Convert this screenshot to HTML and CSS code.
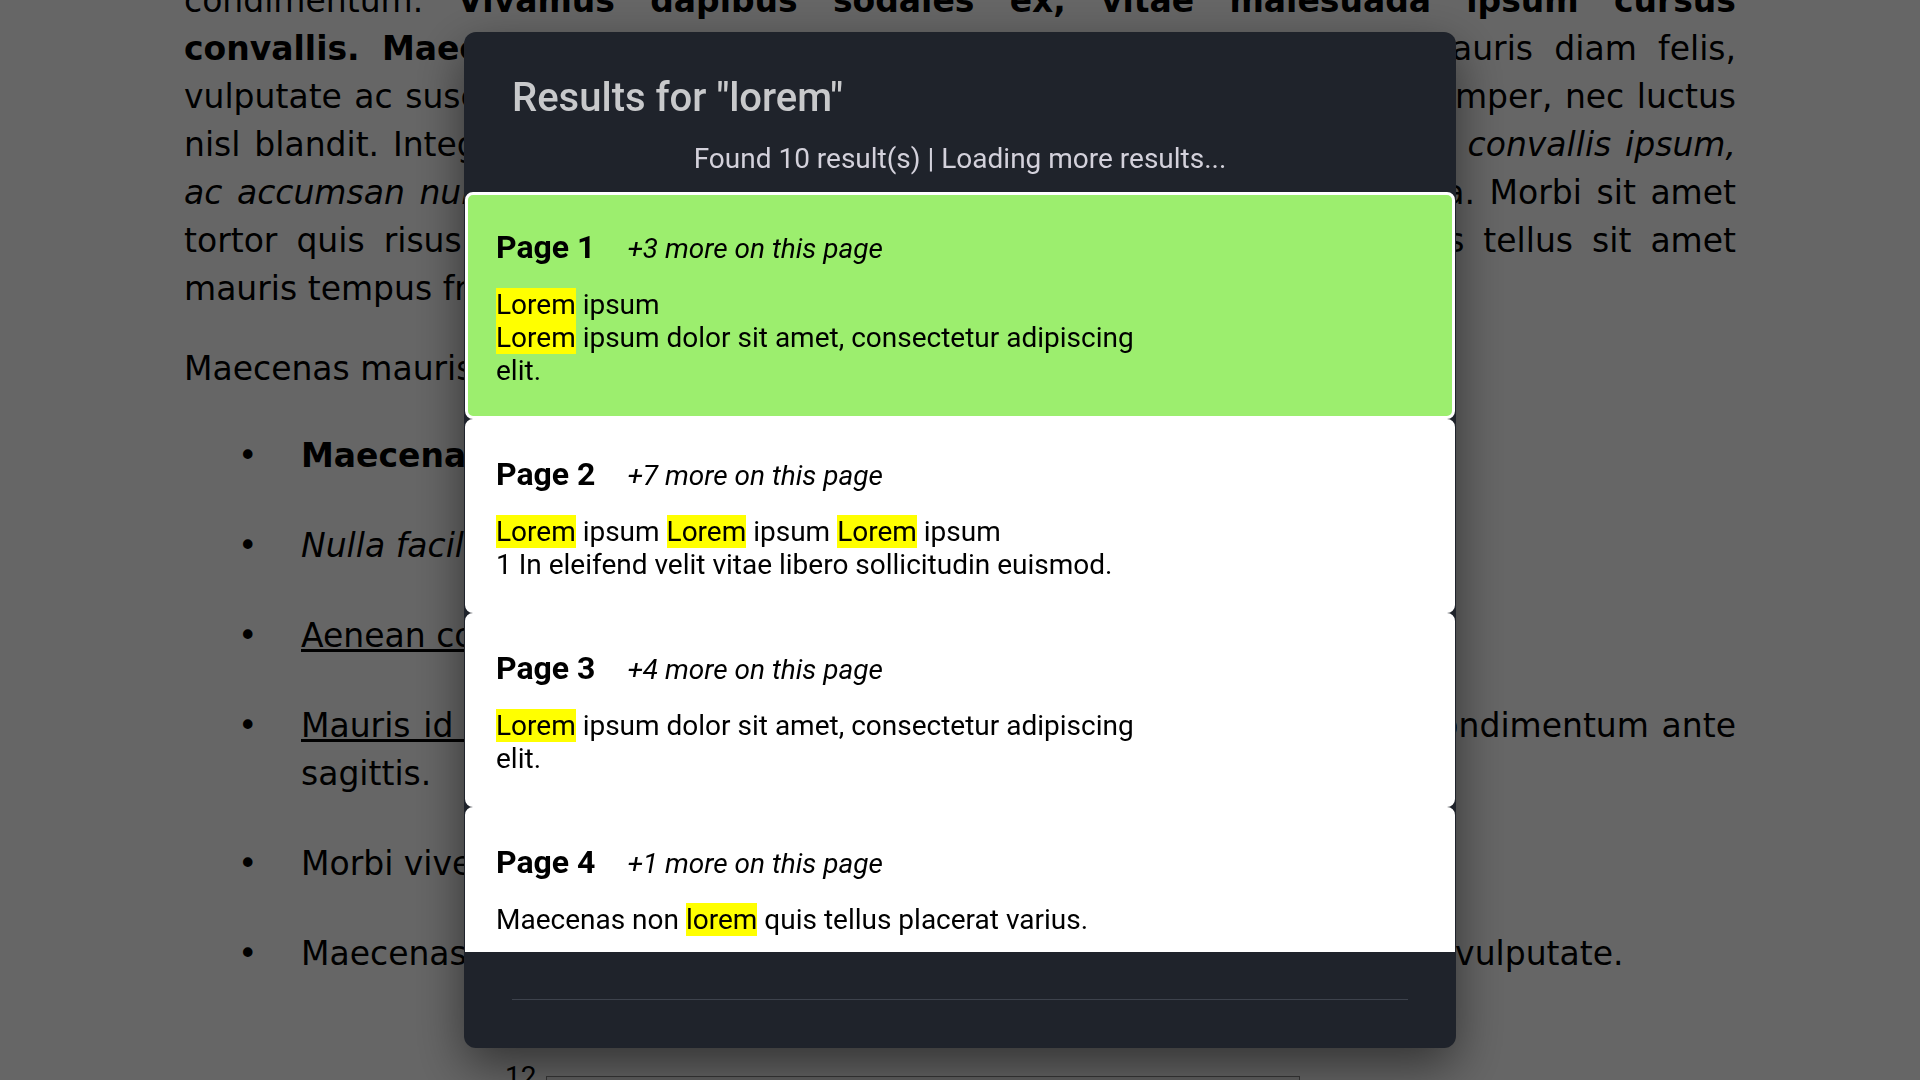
FILE: index.html
```html
<!DOCTYPE html>
<html lang="en">
<head>
<meta charset="utf-8">
<title>Search results</title>
<link rel="stylesheet" href="styles.css">
</head>
<body>
<main class="doc">
  <p class="justified">
    <span class="ln">condimentum. <b>Vivamus dapibus sodales ex, vitae malesuada ipsum cursus</b></span>
    <span class="ln"><b>convallis. Maecenas odio.</b> Sed faucibus varius turpis, non tempor mauris diam felis,</span>
    <span class="ln">vulputate ac suscipit erat pellentesque quam. Etiam lacinia nisl in ipsum semper, nec luctus</span>
    <span class="ln">nisl blandit. Integer posuere tellus sed quis neque pretium finibus, et vitae <i>convallis ipsum,</i></span>
    <span class="ln"><i>ac accumsan nulla</i> porta. Donec ultricies quam et sed dolor porta pharetra. Morbi sit amet</span>
    <span class="ln">tortor quis risus malesuada rhoncus. Curabitur purus lectus odio eu quis tellus sit amet</span>
    <span class="ln last">mauris tempus fringilla.</span>
  </p>
  <p class="second">Maecenas mauris elit, dignissim ac purus quis, tincidunt.</p>
  <ul class="items">
    <li><span class="txt"><b>Maecenas ultricies nunc eu lacus.</b></span></li>
    <li><span class="txt"><i>Nulla facilisi. Vivamus ut lorem.</i></span></li>
    <li><span class="txt"><a href="#">Aenean commodo ligula eget dolor.</a></span></li>
    <li><span class="txt justified"><span class="ln"><a href="#">Mauris id lorem</a> eget massa faucibus ultrices vel vitae augue, sed condimentum ante</span><span class="ln last">sagittis.</span></span></li>
    <li><span class="txt">Morbi viverra lacus vitae turpis.</span></li>
    <li><span class="txt">Maecenas pharetra lacus ut enim ultricies, et porttitor metus sodales vulputate.</span></li>
  </ul>
  <div class="meter-row">
    <span class="meter-label">12</span>
    <span class="meter-box"></span>
  </div>
</main>

<div class="overlay">
  <section class="modal" role="dialog" aria-labelledby="search-title">
    <header class="modal-head">
      <h2 id="search-title" class="modal-title">Results for "lorem"</h2>
      <p class="modal-status">Found 10 result(s) | Loading more results...</p>
    </header>
    <div class="results">
      <article class="result active">
        <h3 class="result-head">Page 1<em class="result-more">+3 more on this page</em></h3>
        <div class="snippet"><mark>Lorem</mark> ipsum</div>
        <div class="snippet"><mark>Lorem</mark> ipsum dolor sit amet, consectetur adipiscing elit.</div>
      </article>
      <article class="result">
        <h3 class="result-head">Page 2<em class="result-more">+7 more on this page</em></h3>
        <div class="snippet"><mark>Lorem</mark> ipsum <mark>Lorem</mark> ipsum <mark>Lorem</mark> ipsum</div>
        <div class="snippet">1 In eleifend velit vitae libero sollicitudin euismod.</div>
      </article>
      <article class="result">
        <h3 class="result-head">Page 3<em class="result-more">+4 more on this page</em></h3>
        <div class="snippet"><mark>Lorem</mark> ipsum dolor sit amet, consectetur adipiscing elit.</div>
      </article>
      <article class="result">
        <h3 class="result-head">Page 4<em class="result-more">+1 more on this page</em></h3>
        <div class="snippet">Maecenas non <mark>lorem</mark> quis tellus placerat varius.</div>
      </article>
      <article class="result">
        <h3 class="result-head">Page 5<em class="result-more">+2 more on this page</em></h3>
        <div class="snippet">Nulla facilisi. Vivamus ut <mark>lorem</mark> vel nisi tempor.</div>
      </article>
    </div>
    <footer class="modal-foot">
      <div class="foot-rule"></div>
    </footer>
  </section>
</div>
</body>
</html>
```

FILE: styles.css
```css
html, body {
  margin: 0;
  height: 100%;
  overflow: hidden;
}

body {
  background: #ffffff;
  color: #000000;
  font-family: "DejaVu Sans", "Liberation Sans", sans-serif;
  font-size: 33px;
  line-height: 48px;
}

.doc {
  width: 1552px;
  margin: -23px auto 0;
}

.doc p {
  margin: 0;
}

.justified .ln {
  display: block;
  text-align: justify;
  text-align-last: justify;
}

.justified .ln.last {
  text-align-last: left;
}

.doc .second {
  margin-top: 32px;
}

.items {
  list-style: none;
  margin: 39px 0 0;
  padding: 0 0 0 54px;
}

.items li {
  display: flex;
}

.items li + li {
  margin-top: 42px;
}

.items li::before {
  content: "\2022";
  flex: 0 0 63px;
}

.items .txt {
  flex: 1;
  min-width: 0;
}

.items a {
  color: inherit;
  text-decoration: underline;
}

.meter-row {
  display: flex;
  align-items: flex-start;
  margin: 82px 0 0 321px;
  font-family: Roboto, "Liberation Sans", sans-serif;
  font-size: 28px;
  line-height: normal;
}

.meter-box {
  width: 752px;
  height: 40px;
  margin: 16px 0 0 10px;
  border: 1px solid #8a8a8a;
  background: #f4f4f4;
}

/* overlay + dialog */

.overlay {
  position: fixed;
  inset: 0;
  background: rgba(0, 0, 0, 0.6);
  display: flex;
  align-items: center;
  justify-content: center;
}

.modal {
  width: 992px;
  height: 1016px;
  background: #1f232b;
  border-radius: 12px;
  box-shadow: 0 18px 50px rgba(0, 0, 0, 0.5);
  display: flex;
  flex-direction: column;
  overflow: hidden;
  font-family: Roboto, "Liberation Sans", sans-serif;
}

.modal-head {
  padding: 42px 48px 17px;
}

.modal-title {
  margin: 0 0 21px;
  font-size: 40px;
  font-weight: 500;
  line-height: normal;
  color: #c8c9cb;
}

.modal-status {
  margin: 0;
  font-size: 28px;
  line-height: normal;
  text-align: center;
  color: #d3d1db;
}

.results {
  flex: 1;
  min-height: 0;
  overflow: hidden;
  padding: 0 1px;
}

.result {
  background: #ffffff;
  border: 3px solid #ffffff;
  border-radius: 8px;
  padding: 33px 28px 29px;
  color: #000000;
}

.result.active {
  background: #9cee6e;
}

.result-head {
  margin: 0 0 22px;
  font-size: 32px;
  font-weight: 700;
  line-height: normal;
}

.result-more {
  margin-left: 32px;
  font-size: 28px;
  font-weight: 400;
  font-style: italic;
}

.snippet {
  max-width: 660px;
  font-size: 28px;
  line-height: normal;
}

.snippet mark {
  background: #ffff00;
  color: #000000;
}

.modal-foot {
  padding: 47px 48px 48px;
}

.foot-rule {
  height: 1px;
  background: #3d424c;
}
```
